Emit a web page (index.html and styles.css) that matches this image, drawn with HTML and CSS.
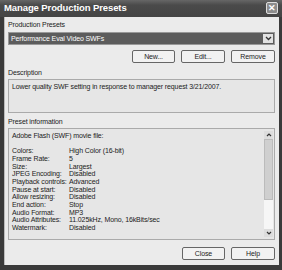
FILE: index.html
```html
<!DOCTYPE html>
<html lang="en">
<head>
    <meta charset="UTF-8">
    <title>Manage Production Presets</title>
    <link rel="stylesheet" href="styles.css">
</head>
<body>
    <div class="window">
        <div class="titlebar">
            <span class="title">Manage Production Presets</span>
            <span class="close">&#x2715;</span>
        </div>
        <div class="content">
            <div class="label">Production Presets</div>
            <div class="select">
                <span class="select-text">Performance Eval Video SWFs</span>
                <span class="select-arrow"><svg width="7" height="5" viewBox="0 0 7 5"><path d="M1 1 L3.5 3.5 L6 1" fill="none" stroke="#333" stroke-width="1.3"/></svg></span>
            </div>
            <div class="btn-row">
                <button class="btn">New...</button>
                <button class="btn">Edit...</button>
                <button class="btn">Remove</button>
            </div>
            <div class="label">Description</div>
            <div class="box desc">Lower quality SWF setting in response to manager request 3/21/2007.</div>
            <div class="label">Preset information</div>
            <div class="box info">
                <div class="info-text">
                    <div>Adobe Flash (SWF) movie file:</div>
                    <div>&nbsp;</div>
                    <div class="row"><span>Colors:</span><span>High Color (16-bit)</span></div>
                    <div class="row"><span>Frame Rate:</span><span>5</span></div>
                    <div class="row"><span>Size:</span><span>Largest</span></div>
                    <div class="row"><span>JPEG Encoding:</span><span>Disabled</span></div>
                    <div class="row"><span>Playback controls:</span><span>Advanced</span></div>
                    <div class="row"><span>Pause at start:</span><span>Disabled</span></div>
                    <div class="row"><span>Allow resizing:</span><span>Disabled</span></div>
                    <div class="row"><span>End action:</span><span>Stop</span></div>
                    <div class="row"><span>Audio Format:</span><span>MP3</span></div>
                    <div class="row"><span>Audio Attributes:</span><span>11.025kHz, Mono, 16kBits/sec</span></div>
                    <div class="row"><span>Watermark:</span><span>Disabled</span></div>
                </div>
                <div class="scrollbar">
                    <span class="sb-arrow"><svg width="6" height="4" viewBox="0 0 6 4"><path d="M1 3 L3 1 L5 3" fill="none" stroke="#333" stroke-width="1.2"/></svg></span>
                    <span class="sb-thumb"></span>
                    <span class="sb-track"></span>
                    <span class="sb-arrow"><svg width="6" height="4" viewBox="0 0 6 4"><path d="M1 1 L3 3 L5 1" fill="none" stroke="#333" stroke-width="1.2"/></svg></span>
                </div>
            </div>
            <div class="btn-row bottom">
                <button class="btn">Close</button>
                <button class="btn">Help</button>
            </div>
        </div>
    </div>
</body>
</html>
```

FILE: styles.css
```css
body { margin: 0; font-family: "Liberation Sans", Arial, sans-serif; }
.window { width: 282px; height: 270px; box-sizing: border-box; background: #3a3a3a; padding: 0 3px 5px 4px; display: flex; flex-direction: column; }
.titlebar { height: 20px; display: flex; align-items: center; justify-content: space-between; background: linear-gradient(#666, #4a4a4a 30%, #444); margin: 0 -3px 0 -4px; padding: 0 4px 2px 4px; }
.title { color: #fff; font-size: 9.5px; font-weight: bold; letter-spacing: -0.1px; }
.close { width: 12px; height: 12px; box-sizing: border-box; border: 1px solid #ddd; border-radius: 2px; background: #8c8c8c; color: #fff; font-size: 9px; font-weight: bold; line-height: 10px; text-align: center; }
.content { flex: 1; background: #ebebeb; border-left: 1px solid #bbb; padding: 3px 4px 0 3px; display: flex; flex-direction: column; font-size: 7px; letter-spacing: -0.12px; color: #222; }
.label { height: 8px; line-height: 8px; margin-top: 1px; }
.select { height: 11px; margin-top: 3px; border: 1px solid #999; background: #5c5c5c; display: flex; align-items: center; justify-content: space-between; }
.select-text { color: #fff; padding-left: 2px; }
.select-arrow { width: 10px; height: 9px; margin-right: 1px; background: #e2e2e2; display: flex; align-items: center; justify-content: center; }
.btn-row { display: flex; justify-content: flex-end; gap: 6px; margin-top: 5px; margin-bottom: 5px; }
.btn { width: 44px; height: 13px; padding: 0; font: inherit; letter-spacing: inherit; color: #222; background: #f2f2f2; border: 1px solid #666; border-radius: 2px; }
.btn-row .btn:first-child { width: 43px; }
.box { border: 1px solid #aaa; background: #e6e6e6; box-sizing: border-box; margin-top: 2px; }
.desc { height: 34px; padding: 3px 3px; margin-bottom: 4px; }
.info { height: 112px; display: flex; padding: 2px 1px 2px 3px; }
.info-text { flex: 1; line-height: 7.67px; padding-top: 1px; }
.row { display: flex; white-space: nowrap; }
.row span:first-child { width: 57px; }
.scrollbar { width: 9px; display: flex; flex-direction: column; }
.sb-arrow { height: 8px; display: flex; align-items: center; justify-content: center; background: #ddd; }
.sb-thumb { height: 61px; background: #cfcfcf; border: 1px solid #bbb; box-sizing: border-box; }
.sb-track { flex: 1; background: #f6f6f6; }
.bottom { margin-top: 7px; }
```
